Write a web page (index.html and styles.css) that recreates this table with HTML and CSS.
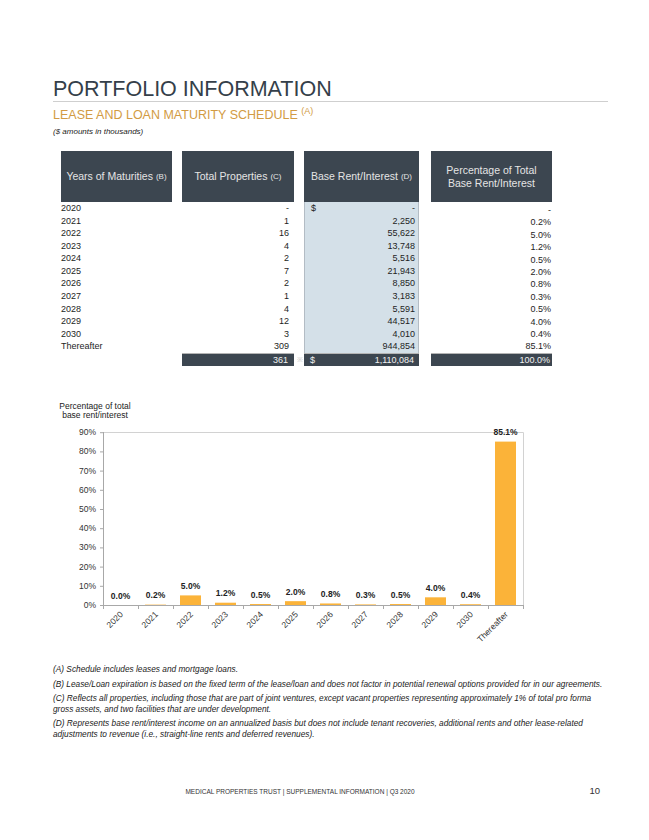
FILE: index.html
```html
<!DOCTYPE html>
<html lang="en">
<head>
<meta charset="utf-8">
<title>Portfolio Information</title>
<link rel="stylesheet" href="styles.css">
</head>
<body>
<div class="page">
  <h1 class="title">PORTFOLIO INFORMATION</h1>
  <h2 class="subtitle">LEASE AND LOAN MATURITY SCHEDULE <sup>(A)</sup></h2>
  <p class="note">($ amounts in thousands)</p>

  <div class="table">
    <div class="col years">
      <div class="th">Years of Maturities <sup>(B)</sup></div>
      <div class="tbody">
        <div class="td">2020</div>
        <div class="td">2021</div>
        <div class="td">2022</div>
        <div class="td">2023</div>
        <div class="td">2024</div>
        <div class="td">2025</div>
        <div class="td">2026</div>
        <div class="td">2027</div>
        <div class="td">2028</div>
        <div class="td">2029</div>
        <div class="td">2030</div>
        <div class="td">Thereafter</div>
      </div>
      <div class="tt blank"></div>
    </div>
    <div class="col props">
      <div class="th">Total Properties <sup>(C)</sup></div>
      <div class="tbody">
        <div class="td">-</div>
        <div class="td">1</div>
        <div class="td">16</div>
        <div class="td">4</div>
        <div class="td">2</div>
        <div class="td">7</div>
        <div class="td">2</div>
        <div class="td">1</div>
        <div class="td">4</div>
        <div class="td">12</div>
        <div class="td">3</div>
        <div class="td">309</div>
      </div>
      <div class="tt">361</div>
    </div>
    <div class="col rent">
      <div class="th">Base Rent/Interest <sup>(D)</sup></div>
      <div class="tbody">
        <div class="td"><span>$</span><span>-</span></div>
        <div class="td"><span></span><span>2,250</span></div>
        <div class="td"><span></span><span>55,622</span></div>
        <div class="td"><span></span><span>13,748</span></div>
        <div class="td"><span></span><span>5,516</span></div>
        <div class="td"><span></span><span>21,943</span></div>
        <div class="td"><span></span><span>8,850</span></div>
        <div class="td"><span></span><span>3,183</span></div>
        <div class="td"><span></span><span>5,591</span></div>
        <div class="td"><span></span><span>44,517</span></div>
        <div class="td"><span></span><span>4,010</span></div>
        <div class="td"><span></span><span>944,854</span></div>
      </div>
      <div class="tt"><span>$</span><span>1,110,084</span></div>
    </div>
    <div class="col pct">
      <div class="th">Percentage of Total<br>Base Rent/Interest</div>
      <div class="tbody">
        <div class="td">-</div>
        <div class="td">0.2%</div>
        <div class="td">5.0%</div>
        <div class="td">1.2%</div>
        <div class="td">0.5%</div>
        <div class="td">2.0%</div>
        <div class="td">0.8%</div>
        <div class="td">0.3%</div>
        <div class="td">0.5%</div>
        <div class="td">4.0%</div>
        <div class="td">0.4%</div>
        <div class="td">85.1%</div>
      </div>
      <div class="tt">100.0%</div>
    </div>
  </div>

  <svg class="chart" width="500" height="255" viewBox="53 395 500 255" xmlns="http://www.w3.org/2000/svg">
    <text class="ctitle" x="95" y="409" text-anchor="middle">Percentage of total</text>
    <text class="ctitle" x="95" y="418" text-anchor="middle">base rent/interest</text>

    <path d="M103.5 432.5H523.5V605" fill="none" stroke="#d2d2d2" stroke-width="1"/>
    <path d="M103.5 432V605.5H523.5" fill="none" stroke="#a8a8a8" stroke-width="1"/>
    <path d="M100 605.5h3.5M100 586.3h3.5M100 567.1h3.5M100 547.9h3.5M100 528.7h3.5M100 509.5h3.5M100 490.3h3.5M100 471.1h3.5M100 451.9h3.5M100 432.7h3.5" stroke="#a8a8a8" stroke-width="1"/>
    <path d="M103.5 605v4M138.5 605v4M173.5 605v4M208.5 605v4M243.5 605v4M278.5 605v4M313.5 605v4M348.5 605v4M383.5 605v4M418.5 605v4M453.5 605v4M488.5 605v4M523.5 605v4" stroke="#a8a8a8" stroke-width="1"/>

    <g class="ytick" text-anchor="end">
      <text x="96" y="608">0%</text>
      <text x="96" y="588.8">10%</text>
      <text x="96" y="569.6">20%</text>
      <text x="96" y="550.4">30%</text>
      <text x="96" y="531.2">40%</text>
      <text x="96" y="512">50%</text>
      <text x="96" y="492.8">60%</text>
      <text x="96" y="473.6">70%</text>
      <text x="96" y="454.4">80%</text>
      <text x="96" y="435.2">90%</text>
    </g>

    <g class="bars" fill="#fbb339">
      <rect x="145" y="604.62" width="21" height="0.38"/>
      <rect x="180" y="595.4" width="21" height="9.6"/>
      <rect x="215" y="602.7" width="21" height="2.3"/>
      <rect x="250" y="604.04" width="21" height="0.96"/>
      <rect x="285" y="601.16" width="21" height="3.84"/>
      <rect x="320" y="603.46" width="21" height="1.54"/>
      <rect x="355" y="604.42" width="21" height="0.58"/>
      <rect x="390" y="604.04" width="21" height="0.96"/>
      <rect x="425" y="597.32" width="21" height="7.68"/>
      <rect x="460" y="604.23" width="21" height="0.77"/>
      <rect x="495" y="441.6" width="21" height="163.4"/>
    </g>

    <g class="vlabel" text-anchor="middle">
      <text x="120.5" y="598.5">0.0%</text>
      <text x="155.5" y="598">0.2%</text>
      <text x="190.5" y="589">5.0%</text>
      <text x="225.5" y="596">1.2%</text>
      <text x="260.5" y="597.5">0.5%</text>
      <text x="295.5" y="594.5">2.0%</text>
      <text x="330.5" y="597">0.8%</text>
      <text x="365.5" y="598">0.3%</text>
      <text x="400.5" y="597.5">0.5%</text>
      <text x="435.5" y="591">4.0%</text>
      <text x="470.5" y="597.5">0.4%</text>
      <text x="505.5" y="435">85.1%</text>
    </g>

    <g class="xlabel" text-anchor="end">
      <text x="123.5" y="615" transform="rotate(-45 123.5 615)">2020</text>
      <text x="158.5" y="615" transform="rotate(-45 158.5 615)">2021</text>
      <text x="193.5" y="615" transform="rotate(-45 193.5 615)">2022</text>
      <text x="228.5" y="615" transform="rotate(-45 228.5 615)">2023</text>
      <text x="263.5" y="615" transform="rotate(-45 263.5 615)">2024</text>
      <text x="298.5" y="615" transform="rotate(-45 298.5 615)">2025</text>
      <text x="333.5" y="615" transform="rotate(-45 333.5 615)">2026</text>
      <text x="368.5" y="615" transform="rotate(-45 368.5 615)">2027</text>
      <text x="403.5" y="615" transform="rotate(-45 403.5 615)">2028</text>
      <text x="438.5" y="615" transform="rotate(-45 438.5 615)">2029</text>
      <text x="473.5" y="615" transform="rotate(-45 473.5 615)">2030</text>
      <text x="508.5" y="615" transform="rotate(-45 508.5 615)">Thereafter</text>
    </g>
  </svg>

  <div class="footnotes">
    <p>(A) Schedule includes leases and mortgage loans.</p>
    <p>(B) Lease/Loan expiration is based on the fixed term of the lease/loan and does not factor in potential renewal options provided for in our agreements.</p>
    <p>(C) Reflects all properties, including those that are part of joint ventures, except vacant properties representing approximately 1% of total pro forma gross assets, and two facilities that are under development.</p>
    <p>(D) Represents base rent/interest income on an annualized basis but does not include tenant recoveries, additional rents and other lease-related adjustments to revenue (i.e., straight-line rents and deferred revenues).</p>
  </div>

  <footer class="footer">
    <span></span>
    <span class="foot-text">MEDICAL PROPERTIES TRUST | SUPPLEMENTAL INFORMATION | Q3 2020</span>
    <span class="page-num">10</span>
  </footer>
</div>
</body>
</html>
```

FILE: styles.css
```css
* {
  box-sizing: border-box;
  margin: 0;
  padding: 0;
}

body {
  margin: 0;
  background: #ffffff;
  font-family: "Liberation Sans", Arial, sans-serif;
  color: #222222;
}

.page {
  width: 649px;
  height: 840px;
  padding: 77px 41px 0 53px;
}

.title {
  font-size: 21.5px;
  font-weight: normal;
  line-height: 24px;
  color: #353f4a;
  border-bottom: 1px solid #cfcfcf;
}

.subtitle {
  margin-top: 6px;
  font-size: 12.5px;
  line-height: 15px;
  font-weight: normal;
  color: #d29b43;
}

.subtitle sup {
  font-size: 9px;
  line-height: 0;
  vertical-align: 5px;
}

.note {
  margin-top: 4px;
  font-size: 8px;
  line-height: 10px;
  font-style: italic;
  color: #222222;
}

/* table */
.table {
  display: flex;
  margin: 14px 0 0 8px;
}

.col {
  display: flex;
  flex-direction: column;
  font-size: 9px;
  color: #1e1e1e;
}

.years { width: 111px; }
.props { width: 112px; margin-left: 10px; }
.rent  { width: 115px; margin-left: 10px; }
.pct   { width: 121px; margin-left: 12px; }

.th {
  height: 51px;
  background: #3c4650;
  color: #e4e4e4;
  font-size: 10.5px;
  line-height: 12.5px;
  display: flex;
  align-items: center;
  justify-content: center;
  text-align: center;
  white-space: nowrap;
}

.th sup {
  font-size: 8px;
  line-height: 0;
  vertical-align: 5px;
  margin-left: 3px;
}

.tbody {
  height: 151px;
  display: flex;
  flex-direction: column;
}

.td {
  height: 12.58px;
  line-height: 12.58px;
  white-space: nowrap;
}

.props .td {
  text-align: right;
  padding-right: 5px;
}

.rent .tbody {
  background: #d4e0e8;
  border-left: 1px solid #b3bcc4;
  border-right: 1px solid #b3bcc4;
}

.rent .td {
  display: flex;
  justify-content: space-between;
  padding: 0 3px 0 6px;
}

.pct .tbody {
  padding-top: 2px;
}

.pct .td {
  height: 12.4px;
  line-height: 12.4px;
  text-align: right;
  padding-right: 1px;
}

.tt {
  height: 13px;
  line-height: 12px;
  border-top: 1px solid #b4b4b4;
  background: #3c4650;
  color: #f2f2f2;
  white-space: nowrap;
}

.years .tt {
  background: transparent;
  border-top-color: transparent;
}

.props .tt {
  position: relative;
  text-align: right;
  padding-right: 6px;
}

.props .tt::after {
  content: "\203B";
  position: absolute;
  right: -9px;
  top: 0;
  font-size: 7px;
  color: #c4c4c4;
}

.rent .tt {
  display: flex;
  justify-content: space-between;
  padding: 0 5px 0 6px;
}

.pct .tt {
  text-align: right;
  padding-right: 2px;
}

/* chart */
.chart {
  display: block;
  margin-top: 29px;
  font-family: "Liberation Sans", Arial, sans-serif;
}

.ctitle {
  font-size: 8.5px;
  fill: #222222;
}

.ytick text {
  font-size: 8.5px;
  fill: #333333;
}

.vlabel text {
  font-size: 8.5px;
  font-weight: bold;
  fill: #222222;
}

.xlabel text {
  font-size: 8.5px;
  fill: #333333;
}

/* footnotes */
.footnotes {
  margin-top: 14px;
  font-size: 8.3px;
  line-height: 10.5px;
  font-style: italic;
  color: #222222;
}

.footnotes p + p {
  margin-top: 4px;
}

/* footer */
.footer {
  display: grid;
  grid-template-columns: 1fr auto 1fr;
  align-items: end;
  margin: 46px -41px 0 -53px;
  padding-right: 49px;
  color: #333333;
}

.foot-text {
  font-size: 6.5px;
  line-height: 10px;
}

.page-num {
  justify-self: end;
  font-size: 9.5px;
  line-height: 12px;
}
```
